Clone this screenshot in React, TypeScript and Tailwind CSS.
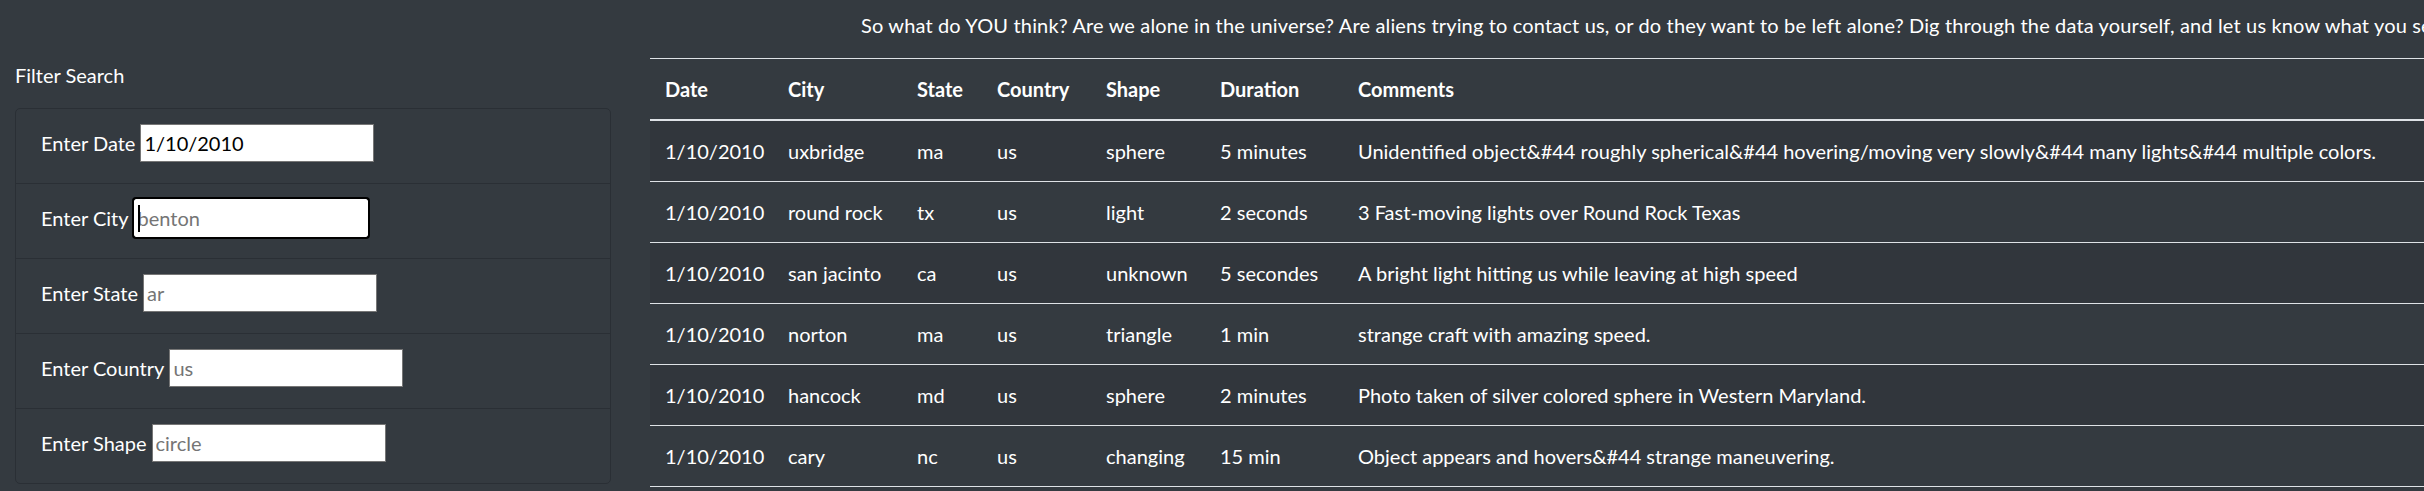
import React from 'react';

const sightings = [
  ['1/10/2010', 'uxbridge', 'ma', 'us', 'sphere', '5 minutes', 'Unidentified object&#44 roughly spherical&#44 hovering/moving very slowly&#44 many lights&#44 multiple colors.'],
  ['1/10/2010', 'round rock', 'tx', 'us', 'light', '2 seconds', '3 Fast-moving lights over Round Rock Texas'],
  ['1/10/2010', 'san jacinto', 'ca', 'us', 'unknown', '5 secondes', 'A bright light hitting us while leaving at high speed'],
  ['1/10/2010', 'norton', 'ma', 'us', 'triangle', '1 min', 'strange craft with amazing speed.'],
  ['1/10/2010', 'hancock', 'md', 'us', 'sphere', '2 minutes', 'Photo taken of silver colored sphere in Western Maryland.'],
  ['1/10/2010', 'cary', 'nc', 'us', 'changing', '15 min', 'Object appears and hovers&#44 strange maneuvering.'],
];

const filters = [
  { label: 'Enter Date', value: '1/10/2010', placeholder: '' },
  { label: 'Enter City', value: '', placeholder: 'benton', focused: true },
  { label: 'Enter State', value: '', placeholder: 'ar' },
  { label: 'Enter Country', value: '', placeholder: 'us' },
  { label: 'Enter Shape', value: '', placeholder: 'circle' },
];

const headers = ['Date', 'City', 'State', 'Country', 'Shape', 'Duration', 'Comments'];

export default function App() {
  return (
    <div className="w-[2424px] h-[491px] overflow-hidden bg-[#343a40] text-white text-[20px] leading-[30px] [font-family:Lato,'Segoe_UI',sans-serif]">
      <div className="flex w-[2600px]">
        {/* Filters column */}
        <div className="w-[626px] shrink-0 px-[15px] pt-[60px]">
          <p>Filter Search</p>
          <ul className="mt-[18px] border border-[#2a2f35] rounded-[5px]">
            {filters.map((f, i) => (
              <li
                key={f.label}
                className={`flex items-baseline gap-[5px] px-[25px] pt-[15px] pb-[21px] ${i < filters.length - 1 ? 'border-b border-[#2a2f35]' : ''}`}
              >
                <label>{f.label}</label>
                <span className="relative">
                  <input
                    type="text"
                    readOnly
                    defaultValue={f.value}
                    placeholder={f.placeholder}
                    className={`w-[234px] h-[38px] bg-white text-black text-[20px] px-[3px] placeholder:text-[#757575] ${f.focused ? 'border border-white outline-2 outline-black rounded-[2px]' : 'border border-[#767676]'}`}
                  />
                  {f.focused && <span className="absolute left-[4px] top-[6px] w-[2px] h-[27px] bg-black" />}
                </span>
              </li>
            ))}
          </ul>
        </div>

        {/* Results column */}
        <div className="pl-[24px] grow">
          <p className="pl-[211px] pt-[10px] mb-[18px] text-[20px] leading-[30px] tracking-[0.15px] whitespace-nowrap">
            So what do YOU think? Are we alone in the universe? Are aliens trying to contact us, or do they want to be left alone? Dig through the data yourself, and let us know what you see.
          </p>
          <table className="table-fixed w-[1850px] border-separate border-spacing-0">
            <colgroup>
              <col className="w-[123px]" />
              <col className="w-[129px]" />
              <col className="w-[80px]" />
              <col className="w-[109px]" />
              <col className="w-[114px]" />
              <col className="w-[138px]" />
              <col />
            </colgroup>
            <thead>
              <tr>
                {headers.map((h) => (
                  <th key={h} className="text-left font-bold px-[15px] py-[15px] border-t border-b-2 border-[#dee2e6]">
                    {h}
                  </th>
                ))}
              </tr>
            </thead>
            <tbody>
              {sightings.map((row, i) => (
                <tr key={i} className={i % 2 === 0 ? 'bg-[#31363c]' : ''}>
                  {row.map((cell, j) => (
                    <td key={j} className="px-[15px] py-[15px] border-b border-[#dee2e6] whitespace-nowrap">
                      {cell}
                    </td>
                  ))}
                </tr>
              ))}
            </tbody>
          </table>
        </div>
      </div>
    </div>
  );
}
